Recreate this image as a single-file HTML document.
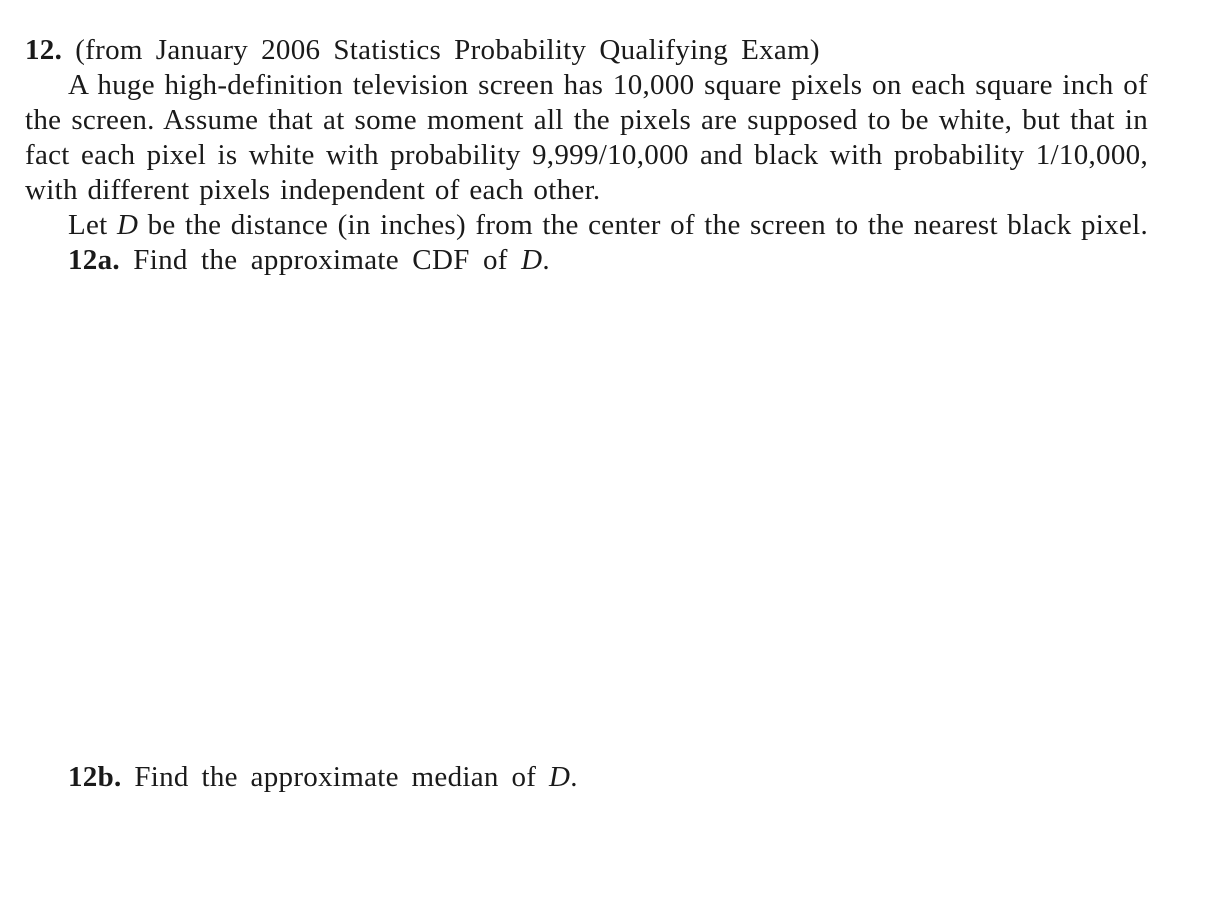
<!DOCTYPE html>
<html><head><meta charset="utf-8"><style>
body{margin:0;width:1208px;height:918px;background:#fff;position:relative;overflow:hidden;font-family:"Liberation Serif",serif;font-size:29px;letter-spacing:0.3px;color:#1a1a1a}
.l{position:absolute;white-space:nowrap;line-height:34px;height:34px}
.j{text-align:justify;text-align-last:justify;white-space:normal}
i{font-style:italic}
</style></head><body>
<div class="l" style="left:25px;top:33px;word-spacing:5.5px"><b>12.</b> (from January 2006 Statistics Probability Qualifying Exam)</div>
<div class="l j" style="left:68px;top:68px;width:1080px">A huge high-definition television screen has 10,000 square pixels on each square inch of</div>
<div class="l j" style="left:25px;top:103px;width:1123px">the screen. Assume that at some moment all the pixels are supposed to be white, but that in</div>
<div class="l j" style="left:25px;top:138px;width:1123px">fact each pixel is white with probability 9,999/10,000 and black with probability 1/10,000,</div>
<div class="l" style="left:25px;top:173px;word-spacing:2.2px">with different pixels independent of each other.</div>
<div class="l j" style="left:68px;top:208px;width:1080px">Let <i>D</i> be the distance (in inches) from the center of the screen to the nearest black pixel.</div>
<div class="l" style="left:68px;top:243px;word-spacing:5.8px"><b>12a.</b> Find the approximate CDF of <i>D</i>.</div>
<div class="l" style="left:68px;top:760px;word-spacing:5.2px"><b>12b.</b> Find the approximate median of <i>D</i>.</div>
</body></html>
